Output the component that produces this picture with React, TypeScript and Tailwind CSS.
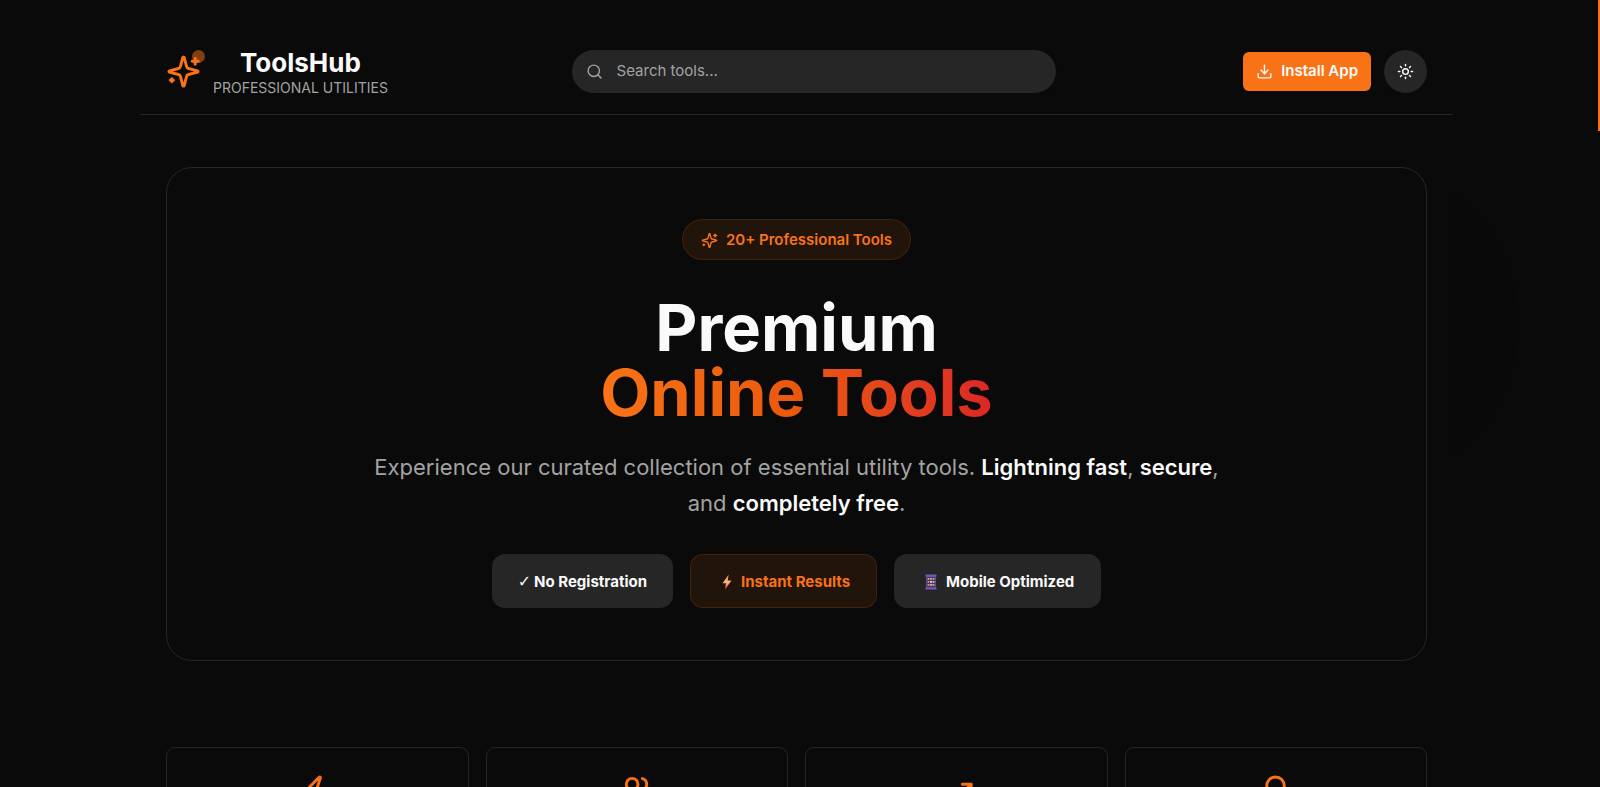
import React from "react";
import { Award, Search, Sun, TrendingUp, Users, Zap } from "lucide-react";

function Sparkles({ className }: { className?: string }) {
  return (
    <svg
      viewBox="0 0 24 24"
      fill="none"
      stroke="currentColor"
      strokeWidth="2"
      strokeLinecap="round"
      strokeLinejoin="round"
      aria-hidden="true"
      className={className}
    >
      <path d="M9.937 15.5A2 2 0 0 0 8.5 14.063l-6.135-1.582a.5.5 0 0 1 0-.962L8.5 9.936A2 2 0 0 0 9.937 8.5l1.582-6.135a.5.5 0 0 1 .963 0L14.063 8.5A2 2 0 0 0 15.5 9.937l6.135 1.581a.5.5 0 0 1 0 .964L15.5 14.063a2 2 0 0 0-1.437 1.437l-1.582 6.135a.5.5 0 0 1-.963 0z" />
      <path d="M20 3v4" />
      <path d="M22 5h-4" />
      <path d="M4 17v2" />
      <path d="M5 18H3" />
    </svg>
  );
}

function DownloadIcon() {
  return (
    <svg
      viewBox="0 0 24 24"
      fill="none"
      stroke="currentColor"
      strokeWidth="2"
      strokeLinecap="round"
      strokeLinejoin="round"
      aria-hidden="true"
      className="size-[17px]"
    >
      <path d="M21 15v4a2 2 0 0 1-2 2H5a2 2 0 0 1-2-2v-4" />
      <path d="m7 10 5 5 5-5" />
      <path d="M12 15V3" />
    </svg>
  );
}

function BoltEmoji() {
  return (
    <svg viewBox="0 0 20 16" aria-hidden="true" className="h-4 w-5">
      <defs>
        <linearGradient id="bolt" x1="0" y1="0" x2="0" y2="1">
          <stop offset="0" stopColor="#f9803c" />
          <stop offset="0.5" stopColor="#fdb67c" />
          <stop offset="1" stopColor="#dd3f5c" />
        </linearGradient>
      </defs>
      <path d="M11.6 0.6 5.6 9.2h3.2L8.2 15.6 14.4 6.4h-3.6z" fill="url(#bolt)" />
    </svg>
  );
}

function PhoneEmoji() {
  return (
    <svg viewBox="0 0 20 16" aria-hidden="true" className="h-4 w-5">
      <rect x="5" y="1" width="10" height="14" fill="#5f4b93" />
      <rect x="4.5" y="0.5" width="11" height="2.2" fill="#7659b0" />
      <rect x="4.5" y="13.6" width="11" height="1.9" fill="#7659b0" />
      <rect x="6" y="3" width="8" height="10.2" fill="#43356e" />
      <g>
        <rect x="6.6" y="4" width="1.8" height="1.8" fill="#f2a65a" />
        <rect x="9.1" y="4" width="1.8" height="1.8" fill="#7fc4f0" />
        <rect x="11.6" y="4" width="1.8" height="1.8" fill="#e9a06e" />
        <rect x="6.6" y="7" width="1.8" height="1.8" fill="#ef7f5a" />
        <rect x="9.1" y="7" width="1.8" height="1.8" fill="#e8d9f0" />
        <rect x="11.6" y="7" width="1.8" height="1.8" fill="#f6c25c" />
        <rect x="6.6" y="10" width="1.8" height="1.8" fill="#f08c74" />
        <rect x="9.1" y="10" width="1.8" height="1.8" fill="#f4b96a" />
        <rect x="11.6" y="10" width="1.8" height="1.8" fill="#9db7f2" />
      </g>
    </svg>
  );
}

const stats = [Zap, Users, TrendingUp, Award];

export default function App() {
  return (
    <div className="relative h-screen overflow-hidden bg-[#0a0a0a] pr-[7px] font-['Inter',sans-serif] text-[#fafafa]">
      <div className="absolute top-[162px] right-[82px] size-[324px] rounded-full bg-[#090909]" />
      <div className="fixed top-0 right-0 h-[131px] w-[2px] bg-[#f97316]" />

      <div className="relative mx-auto max-w-[1313px] bg-[#0a0a0a]">
        <header className="flex items-center justify-between border-b border-[#262626] px-[26px] pt-[46px] pb-[18px]">
          <a href="#" className="flex items-center gap-3">
            <span className="relative">
              <Sparkles className="size-[35px] text-[#f97316]" />
              <span className="absolute -top-1 -right-1 size-[13px] rounded-full bg-[#f97316]/50" />
            </span>
            <span className="flex flex-col items-center">
              <span className="text-[26px] leading-[33px] font-bold">ToolsHub</span>
              <span className="text-sm leading-[17px] text-[#a3a3a3] uppercase">
                Professional Utilities
              </span>
            </span>
          </a>

          <div className="mr-1 flex h-[43px] w-full max-w-[484px] items-center gap-[14px] rounded-full bg-[#262626] px-[14px] text-[#a3a3a3]">
            <Search className="size-[17px] shrink-0" />
            <input
              type="text"
              aria-label="Search tools"
              placeholder="Search tools..."
              className="w-full bg-transparent text-[15px] leading-6 outline-none placeholder:text-[#a3a3a3]"
            />
          </div>

          <div className="flex items-center gap-[13px]">
            <button
              type="button"
              className="flex h-[39px] items-center gap-2 rounded-md bg-[#f97316] px-[13px] text-[15px] font-semibold"
            >
              <DownloadIcon />
              Install App
            </button>
            <button
              type="button"
              aria-label="Toggle theme"
              className="flex size-[43px] items-center justify-center rounded-full bg-[#262626]"
            >
              <Sun className="size-[17px]" />
            </button>
          </div>
        </header>

        <main className="px-[26px] pt-[52px]">
          <section className="flex flex-col items-center rounded-[26px] border border-[#262626] px-[52px] pt-[51px] pb-[52px] text-center">
            <div className="flex h-[41px] items-center gap-2 rounded-full border border-[#f97316]/15 bg-[#f97316]/10 px-[18px] pt-px text-[15px] font-semibold text-[#f97316]">
              <Sparkles className="size-[17px]" />
              20+ Professional Tools
            </div>
            <h1 className="mt-[35px] text-[65px] leading-[65px] font-bold">
              <span className="block">Premium</span>
              <span className="block bg-linear-to-r from-[#f97316] via-[#ea580c] to-[#dc2626] bg-clip-text text-transparent">
                Online Tools
              </span>
            </h1>
            <p className="mt-6 max-w-[860px] text-[22px] leading-9 text-[#a3a3a3]">
              Experience our curated collection of essential utility tools.{" "}
              <strong className="font-semibold text-[#fafafa]">Lightning fast</strong>,{" "}
              <strong className="font-semibold text-[#fafafa]">secure</strong>, and{" "}
              <strong className="font-semibold text-[#fafafa]">completely free</strong>.
            </p>
            <ul className="mt-[33px] flex gap-[17px] text-[15px] font-bold">
              <li className="flex h-[54px] items-center gap-[3px] rounded-[13px] bg-[#262626] px-[26px] pt-0.5">
                <span className="font-['DejaVu_Sans',sans-serif] text-base leading-5">✓</span>
                No Registration
              </li>
              <li className="flex h-[54px] items-center gap-1 rounded-[13px] border border-[#f97316]/15 bg-[#f97316]/10 px-[26px] pt-0.5 text-[#f97316]">
                <BoltEmoji />
                Instant Results
              </li>
              <li className="flex h-[54px] items-center gap-[5px] rounded-[13px] bg-[#262626] px-[27px] pt-0.5">
                <PhoneEmoji />
                Mobile Optimized
              </li>
            </ul>
          </section>

          <section className="mt-[86px] grid grid-cols-4 gap-[17px]">
            {stats.map((Icon, i) => (
              <div
                key={i}
                className="flex min-h-40 justify-center rounded-[9px] border border-[#262626] p-[26px]"
              >
                <Icon className="size-[35px] text-[#f97316]" />
              </div>
            ))}
          </section>
        </main>
      </div>
    </div>
  );
}
